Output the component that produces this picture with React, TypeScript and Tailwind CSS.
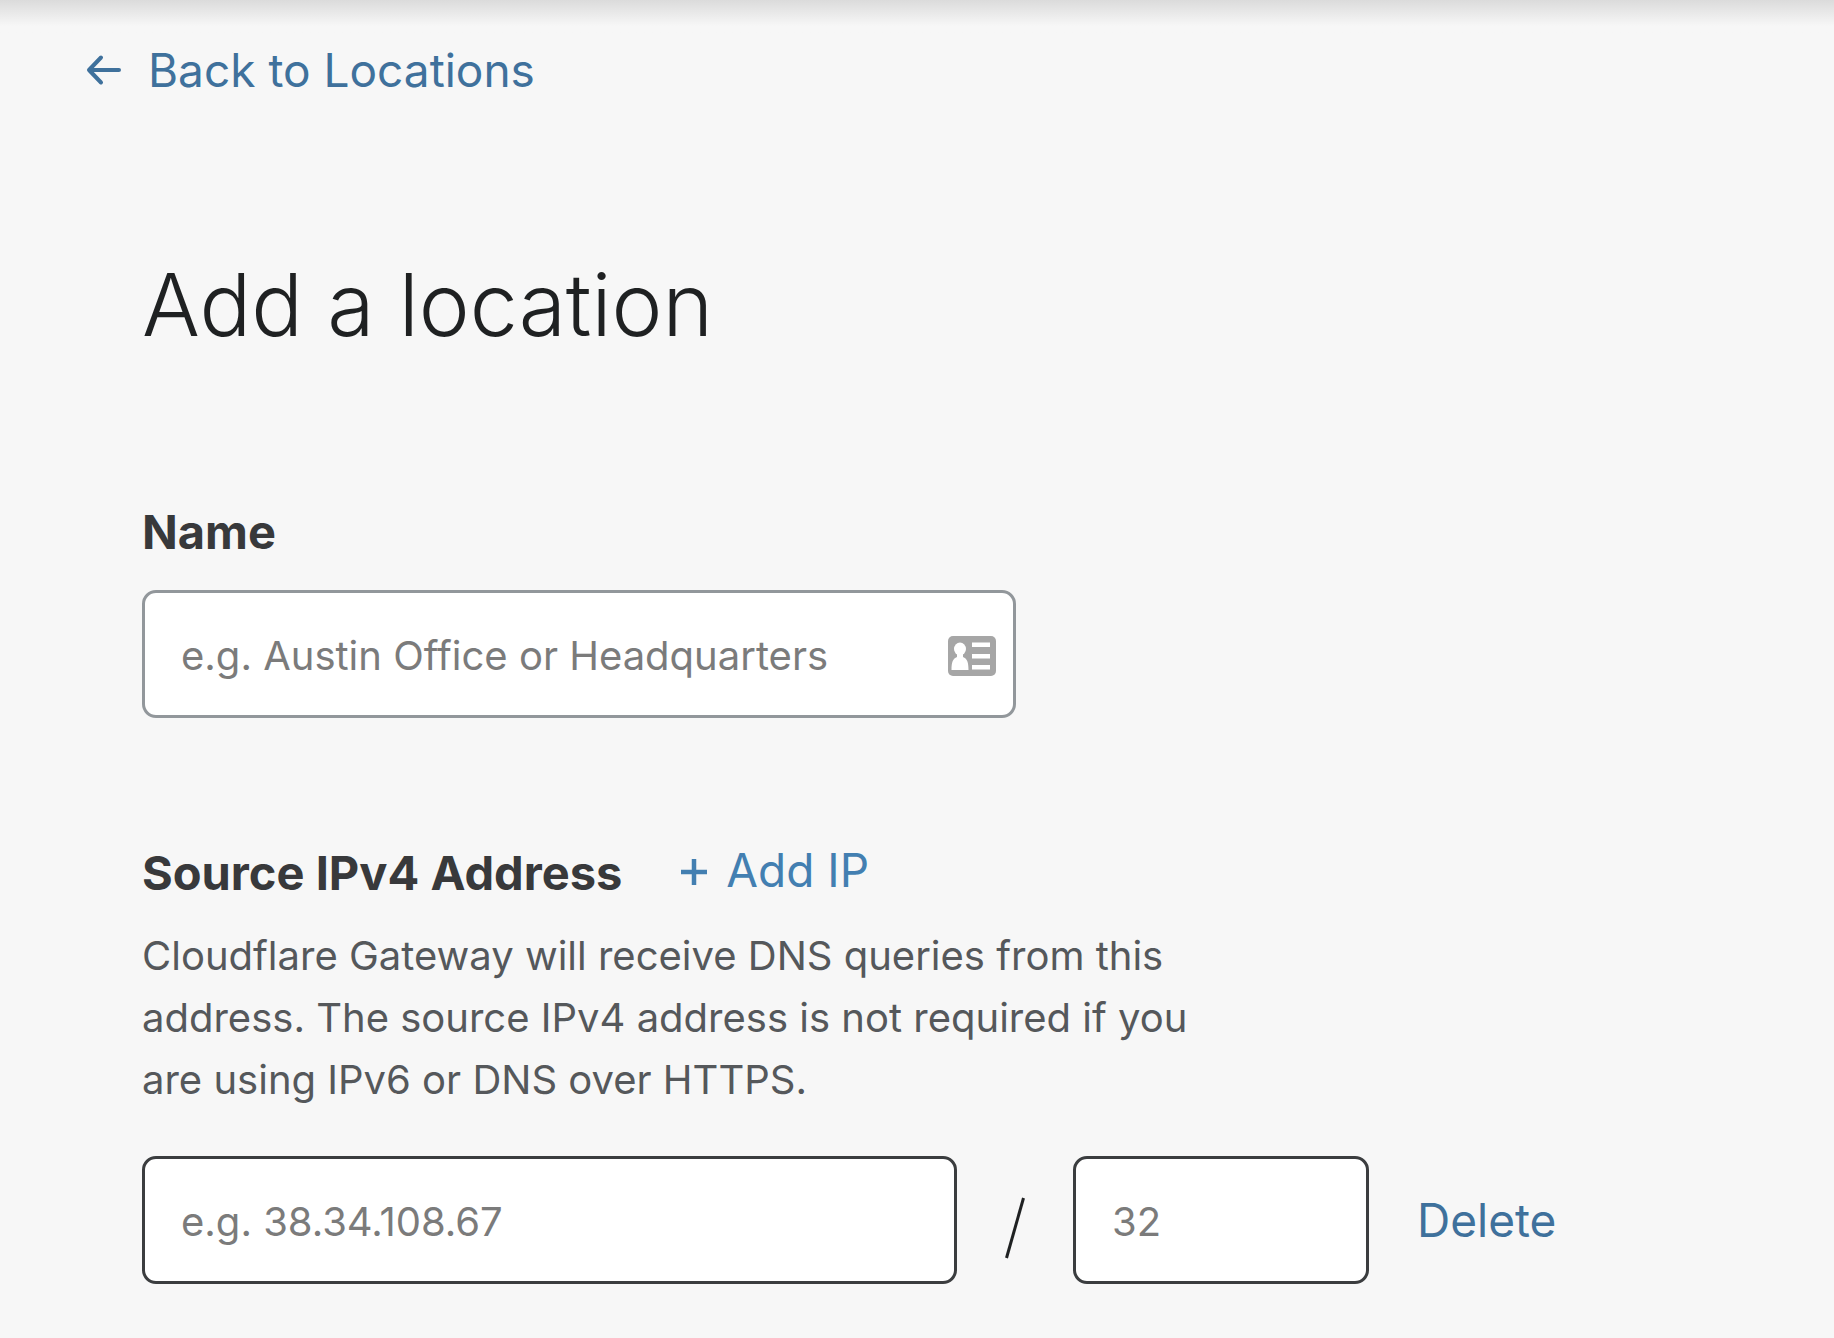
const inputBase =
  'h-32 w-full rounded-[14px] border-3 bg-white pt-[2px] pl-9 text-[40px] text-[#3c3c3c] placeholder:text-[#7b7b7b] placeholder:opacity-100 outline-none focus:border-[#3f76a3]';

function ArrowLeft() {
  return (
    <svg className="h-9 w-9" viewBox="0 0 36 36" fill="none" stroke="currentColor" strokeWidth="4" strokeLinecap="round" strokeLinejoin="round" aria-hidden="true">
      <path d="M33 18H3M15 5.500L3 18l12 12.500" />
    </svg>
  );
}

function ContactCard() {
  return (
    <svg className="h-10 w-12" viewBox="0 0 48 40" aria-hidden="true">
      <rect width="48" height="40" rx="5" fill="#a6a6a6" />
      <ellipse cx="12" cy="13" rx="6" ry="6.500" fill="#fff" />
      <path d="M9 17h6v4c4 1.500 5.500 5 5.500 13h-17c0-8 1.500-11.500 5.500-13z" fill="#fff" />
      <path d="M24 6.500h18V11H24zM24 18h18v4.500H24zM24 29h18v4.500H24z" fill="#fff" />
    </svg>
  );
}

export default function App() {
  return (
    <div className="min-h-screen bg-[#f7f7f7] font-['Inter',sans-serif] text-[#1f2122]">
      <div className="h-10 bg-linear-to-b from-[#dbdbdb] to-[#f7f7f7] to-65%" />
      <nav className="px-[86px]">
        <a href="#locations" className="inline-flex items-center gap-[26px] text-[46px] leading-[60px] text-[#3f719c]">
          <ArrowLeft />
          Back to Locations
        </a>
      </nav>

      <main className="px-[142px] pt-[149px]">
        <h1 className="text-[86px] leading-[112px] font-[350]">Add a location</h1>

        <form className="pt-[141px]">
          <label htmlFor="name" className="block text-[47px] leading-[60px] font-bold text-[#38393b]">
            Name
          </label>
          <div className="relative mt-7 max-w-[874px]">
            <input id="name" type="text" placeholder="e.g. Austin Office or Headquarters" className={`${inputBase} border-[#92979b] pr-[80px]`} />
            <span className="pointer-events-none absolute inset-y-0 right-5 flex items-center pt-[3px]">
              <ContactCard />
            </span>
          </div>

          <div className="mt-[122px] flex items-center gap-[58px]">
            <label htmlFor="ip" className="text-[47px] leading-[60px] font-bold text-[#38393b]">
              Source IPv4 Address
            </label>
            <button type="button" className="flex items-center gap-[18px] pb-[6px] text-[46px] leading-[60px] text-[#437fb1]">
              <svg className="mt-1 h-7 w-7" viewBox="0 0 28 28" stroke="currentColor" strokeWidth="4.500" aria-hidden="true">
                <path d="M14 1v26M1 14h26" />
              </svg>
              Add IP
            </button>
          </div>
          <p className="mt-[19px] max-w-[1070px] text-[40px] leading-[62px] text-[#55585b]">
            Cloudflare Gateway will receive DNS queries from this address. The source IPv4 address is not required if you are using IPv6 or DNS over HTTPS.
          </p>

          <div className="mt-[45px] flex items-center">
            <div className="w-[815px]">
              <input id="ip" type="text" placeholder="e.g. 38.34.108.67" className={`${inputBase} border-[#3b3d3f]`} />
            </div>
            <svg className="mx-12 mt-4 h-[62px] w-5" viewBox="0 0 20 62" stroke="#1f2122" strokeWidth="3" aria-hidden="true">
              <path d="M18.500 1L1.500 61" />
            </svg>
            <div className="w-[296px]">
              <input aria-label="Prefix length" type="text" placeholder="32" className={`${inputBase} border-[#3b3d3f]`} />
            </div>
            <button type="button" className="ml-12 text-[46px] leading-[60px] text-[#3f719c]">
              Delete
            </button>
          </div>
        </form>
      </main>
    </div>
  );
}
